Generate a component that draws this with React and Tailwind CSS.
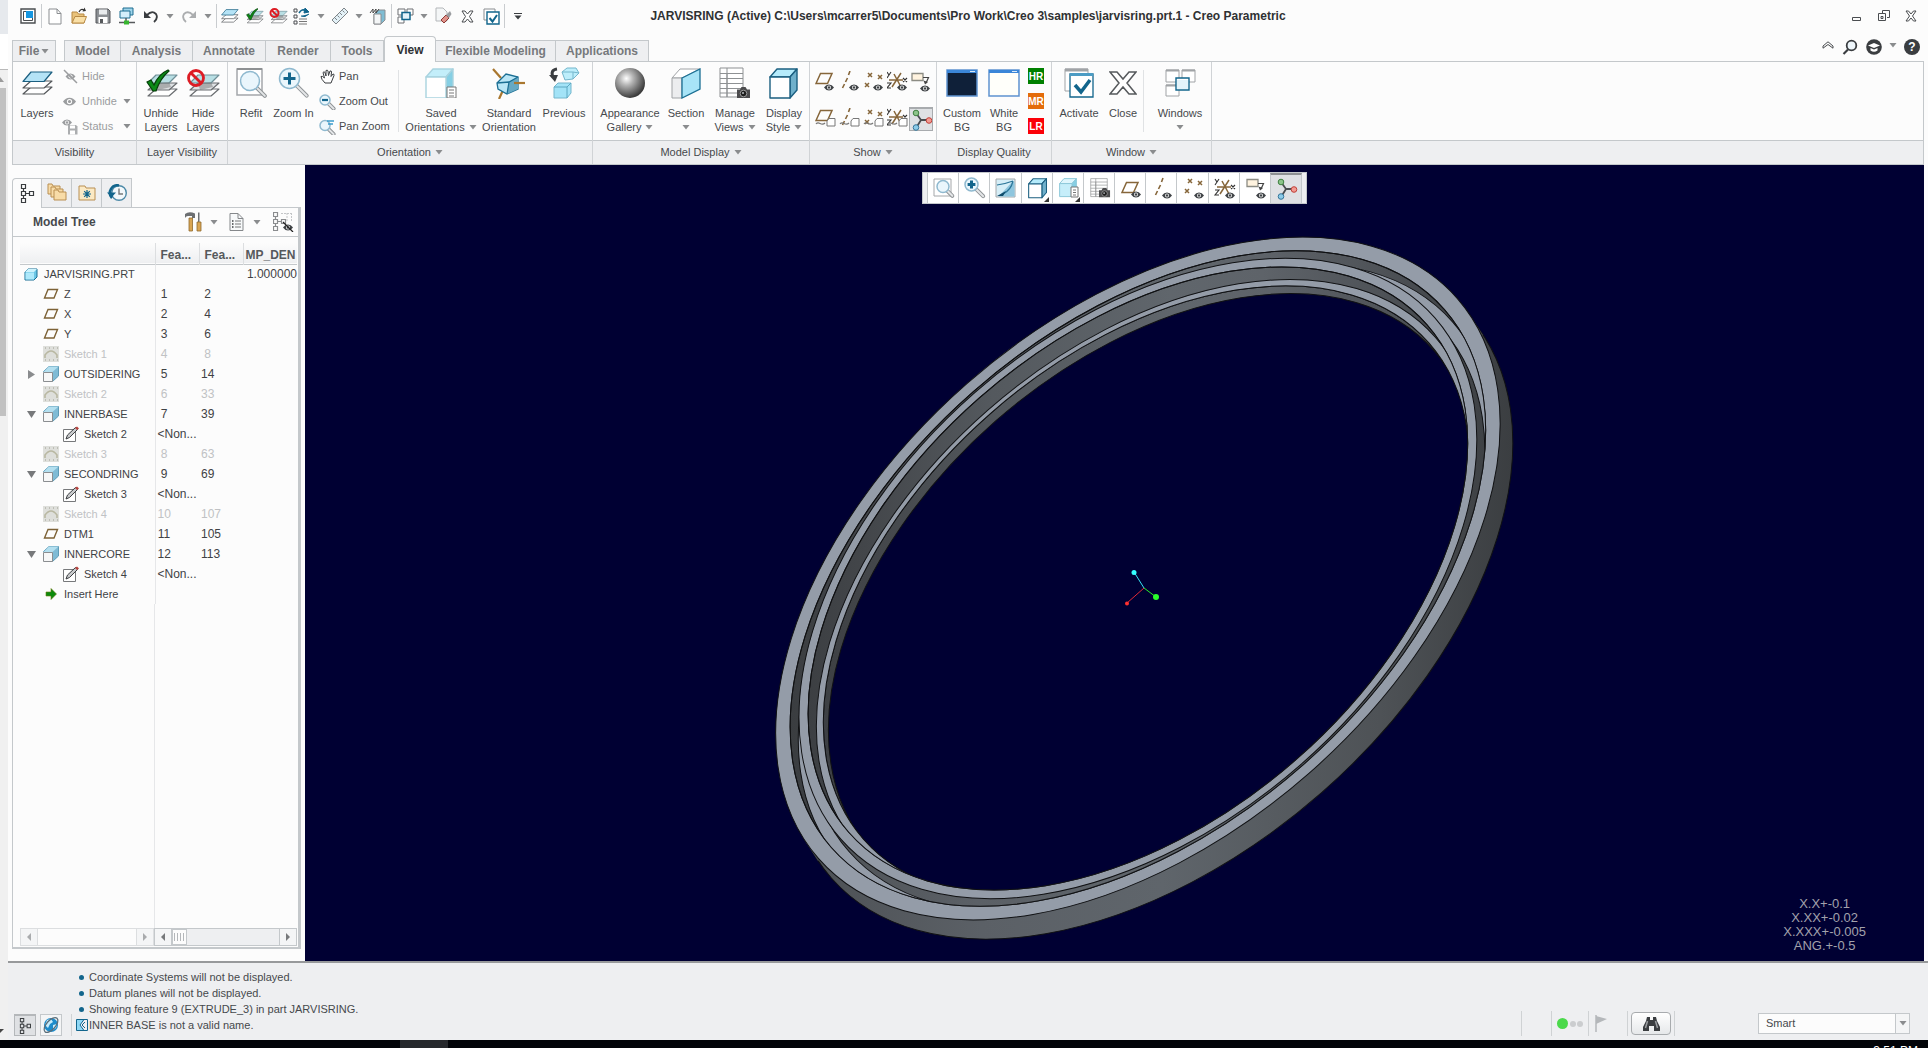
import React from "react";

/* ---------- shared glyphs ---------- */

const Svg = ({ w = 20, h = 20, children }) => (
  <svg width={w} height={h} viewBox={`0 0 ${w} ${h}`} fill="none" className="shrink-0" aria-hidden="true">
    {children}
  </svg>
);

const Arrow = ({ dark }) => (
  <svg width="8" height="5" viewBox="0 0 8 5" className="inline-block shrink-0 align-middle" aria-hidden="true">
    <path d="M0.5 0h7L4 4.6z" fill={dark ? "#404040" : "#8a8c8e"} />
  </svg>
);

const Eye = ({ x = 0, y = 0, c = "#3f4346" }) => (
  <g transform={`translate(${x} ${y})`}>
    <path d="M0 3.5Q2 .5 5 .5t5 3Q8 6.500 5 6.500T0 3.500z" fill={c} />
    <circle cx="5" cy="3.500" r="2" fill="#fff" />
    <circle cx="5" cy="3.500" r="1.200" fill={c} />
  </g>
);

const Cam = ({ x = 0, y = 0 }) => (
  <g transform={`translate(${x} ${y})`}>
    <path d="M0 2.500h3L4.500 0h4L10 2.500h3V11H0z" fill="#4b4b4d" />
    <circle cx="6.500" cy="6.500" r="3.300" fill="#1e1e1e" stroke="#9a9a9a" />
    <circle cx="6" cy="6" r="1" fill="#b8bcc0" />
  </g>
);

const Lens = ({ x, y, r, len, sign }) => (
  <g>
    <path d={`M${x + r * 0.72} ${y + r * 0.72}l${len} ${len}`} stroke="#8f9396" strokeWidth="4" strokeLinecap="round" />
    <path d={`M${x + r * 0.72} ${y + r * 0.72}l${len} ${len}`} stroke="#e4e6e8" strokeWidth="2" strokeLinecap="round" />
    <circle cx={x} cy={y} r={r} fill="#eaf6fc" stroke="#8fb9cf" strokeWidth="1.500" />
    {sign === "+" && <path d={`M${x - r * 0.6} ${y}h${r * 1.2}M${x} ${y - r * 0.6}v${r * 1.2}`} stroke="#12658c" strokeWidth={r > 6 ? 3 : 2.2} />}
    {sign === "-" && <path d={`M${x - r * 0.6} ${y}h${r * 1.2}`} stroke="#12658c" strokeWidth="2.200" />}
  </g>
);

const Stack = ({ k = 1 }) => (
  <g transform={`scale(${k})`} strokeWidth={1.2} strokeLinejoin="round">
    <path d="M1 23L9 16H30L22 23z" fill="#fff" stroke="#55585b" />
    <path d="M1 17L9 10H30L22 17z" fill="#fff" stroke="#55585b" />
    <path d="M1 10.500L9 1H30L22 10.500z" fill="#b5e3f6" stroke="#1b5f80" />
  </g>
);

const StackGray = ({ k = 1 }) => (
  <g transform={`scale(${k})`} strokeWidth={1.2} strokeLinejoin="round">
    <path d="M4 27L12 20H33L25 27z" fill="#fff" stroke="#6a6d70" />
    <path d="M4 21L12 14H33L25 21z" fill="#dfe2e4" stroke="#6a6d70" />
    <path d="M4 14L12 6H33L25 14z" fill="#b9dfe4" stroke="#6f8f98" />
    <path d="M12 14L25 13L27 18L14 21z" fill="#777" opacity=".5" />
  </g>
);

const Check = ({ k = 1 }) => (
  <path transform={`scale(${k})`} d="M3 13L7 11L10 16C13 9 17 4 24 1L25 2C19 7 15 13 12 22H9z" fill="#0b8a16" stroke="#063f09" strokeWidth="1.200" />
);

const No = ({ x, y, r }) => (
  <g stroke="#dd1c24" strokeWidth={r > 6 ? 2.8 : 2}>
    <circle cx={x} cy={y} r={r} />
    <path d={`M${x - r * 0.7} ${y - r * 0.7}L${x + r * 0.7} ${y + r * 0.7}`} />
  </g>
);

const Cube = ({ k = 1, line = "#1b5f80", front = "#fff", top = "#b5ebfb", side = "#6fb0cb" }) => (
  <g transform={`scale(${k})`} stroke={line} strokeWidth={1.4 / k > 1.6 ? 1.6 : 1.4} strokeLinejoin="round">
    <path d="M1 9L8 1H28L21 9z" fill={top} />
    <path d="M21 9L28 1V22L21 30z" fill={side} />
    <path d="M1 9H21V30H1z" fill={front} />
  </g>
);

const Triad = () => (
  <g>
    <path d="M5 4L10 11L5 19M10 11H18" stroke="#4a4d50" strokeWidth="1.800" />
    <circle cx="5" cy="4" r="2.800" fill="#8cc48a" stroke="#3f8040" />
    <circle cx="5" cy="18.500" r="2.800" fill="#8ccbe8" stroke="#34759a" />
    <circle cx="18" cy="11.500" r="2.800" fill="#f29a92" stroke="#c04038" />
  </g>
);

const Planes = () => <path d="M5.500 2.500H17L12.500 12.500H1z" stroke="#86663a" strokeWidth="1.500" />;
const Axis = () => <path d="M11 0L9.500 4M8.500 7L6.500 11M5.500 13L3.500 17" stroke="#86663a" strokeWidth="1.600" />;
const Points = () => (
  <path d="M5 2l4 4m0-4l-4 4M15 4l4 4m0-4l-4 4M2 12l4 4m0-4l-4 4" stroke="#86663a" strokeWidth="1.500" />
);
const Csys = () => (
  <g>
    <path d="M2 9H16M7 3L14 16M14 2L5 16" stroke="#86663a" strokeWidth="1.500" />
    <path d="M0 1l2 3 2-3M2 4l-2 3M16 7l4 4m0-4l-4 4M0 12h4l-4 5h4" stroke="#333" strokeWidth="1.100" />
  </g>
);
const Note = () => (
  <g>
    <path d="M1 2.500H12V9.500H1z" fill="#fff3df" stroke="#8c8c84" strokeWidth="1.300" />
    <path d="M12 6.500H17.500L15 12" stroke="#444" strokeWidth="1.200" />
    <path d="M12.500 9.500L17 11L14 13.500z" fill="#444" />
  </g>
);
const Tag = () => (
  <g>
    <path d="M12 13L14 10.500H20V18H12z" fill="#fff" stroke="#777" />
    <path d="M1 16c3-4 5 3 9-1" stroke="#777" strokeWidth="1.200" />
  </g>
);
const SheetTable = () => (
  <g stroke="#8e9193">
    <path d="M1 1H24V30H1z" fill="#fff" />
    <path d="M1 6.500H24M1 11.500H24M1 16.500H24M1 21.500H24M1 26H24M8 6V30M8 1V30" />
  </g>
);
const Doc = ({ children }) => (
  <g>
    <path d="M3 1.500H11L16 6.500V18.500H3z" fill="#f7f9fa" stroke="#85888b" />
    <path d="M11 1.500V6.500H16" stroke="#85888b" />
    {children}
  </g>
);
const TreeGlyph = ({ c = "#3a3d40" }) => (
  <path d="M2.500 .5h4v4h-4zM2.500 7.500h4v4h-4zM2.500 14.500h4v4h-4zM10.500 7.500h4v4h-4zM4.500 4.500v3M4.500 11.500v3M6.500 9.500h4" stroke={c} strokeWidth="1.200" />
);
const WindowGlyph = ({ body }) => (
  <Svg w={32} h={28}>
    <path d="M1 1H31V27H1z" fill={body} stroke="#5f93d0" strokeWidth="1.500" />
    <path d="M1 1H31V4H1z" fill="#3b86d8" />
    <path d="M24 2.500h5" stroke="#d9e9f8" />
  </Svg>
);

/* ---------- quick access bar ---------- */

const Sep = () => (
  <span className="flex w-[3px] shrink-0 justify-center">
    <span className="h-6 w-px bg-[#c9cccf]" />
  </span>
);

const QBtn = ({ label, children }) => (
  <button aria-label={label} className="flex h-6 w-6 shrink-0 items-center justify-center">
    {children}
  </button>
);
const QDrop = ({ label, dark }) => (
  <button aria-label={label} className="flex h-6 w-[14px] shrink-0 items-center justify-center">
    <Arrow dark={dark} />
  </button>
);

function QuickBar() {
  return (
    <div className="flex items-center pl-2">
      <QBtn label="Window menu">
        <Svg w={16} h={16}>
          <path d="M1 1H15V15H1z" stroke="#4a4d50" strokeWidth="1.400" fill="#fff" />
          <path d="M3.500 3.500H12.500V12.500H3.500z" stroke="#4a4d50" fill="#fff" />
          <path d="M6 3H13V10H6z" fill="#1696e0" />
        </Svg>
      </QBtn>
      <Sep />
      <QBtn label="New">
        <Svg w={14} h={17}>
          <path d="M1 1H9L13 5.500V16H1z" fill="#fff" stroke="#8b8e91" />
          <path d="M9 1V5.500H13" stroke="#8b8e91" />
        </Svg>
      </QBtn>
      <QBtn label="Open">
        <Svg w={18} h={18}>
          <path d="M2 16V5H7L8.500 7H14V16z" fill="#e9c27a" stroke="#b88a45" />
          <path d="M2 16L5 9.500H16.500L14 16z" fill="#f9dfa6" stroke="#b88a45" />
          <path d="M9 5Q11 1 14 3" stroke="#333" strokeWidth="1.300" />
          <path d="M12.500 4.500L16 4L14.500 .5z" fill="#333" />
        </Svg>
      </QBtn>
      <QBtn label="Save">
        <Svg w={16} h={16}>
          <path d="M1 1H13L15 3V15H1z" fill="#8b8f93" stroke="#56595c" />
          <path d="M4 1.500H12V6.500H4z" fill="#e8ebed" />
          <path d="M3.500 9H12.500V15H3.500z" fill="#fff" />
          <path d="M5 11h3v4H5z" fill="#56595c" />
        </Svg>
      </QBtn>
      <QBtn label="Conferencing">
        <Svg w={18} h={18}>
          <path d="M5 1H15V8H5z" fill="#9fd4ea" stroke="#1d6c90" />
          <path d="M2 4H12V11H2z" fill="#d4eefa" stroke="#1d6c90" />
          <path d="M8 11v4M1 15.500H17" stroke="#56595c" strokeWidth="1.500" />
          <path d="M6 13.500h5v4H6z" fill="#37b62f" />
        </Svg>
      </QBtn>
      <QBtn label="Undo">
        <Svg w={16} h={14}>
          <path d="M4 6Q9 1 13 5Q15.500 9 11 13" stroke="#3a3d40" strokeWidth="1.800" />
          <path d="M1 2V9H8z" fill="#3a3d40" />
        </Svg>
      </QBtn>
      <QDrop label="Undo list" />
      <QBtn label="Redo">
        <Svg w={16} h={14}>
          <path d="M12 6Q7 1 3 5Q.5 9 5 13" stroke="#abadaf" strokeWidth="1.800" />
          <path d="M15 2V9H8z" fill="#abadaf" />
        </Svg>
      </QBtn>
      <QDrop label="Redo list" />
      <Sep />
      <QBtn label="Layers"><Svg w={18} h={15}><Stack k={0.57} /></Svg></QBtn>
      <QBtn label="Unhide layers"><Svg w={19} h={16}><StackGray k={0.55} /><Check k={0.52} /></Svg></QBtn>
      <QBtn label="Hide layers"><Svg w={19} h={16}><StackGray k={0.55} /><No x={5.5} y={5} r={4} /></Svg></QBtn>
      <QBtn label="Regenerate">
        <Svg w={18} h={17}>
          <path d="M1 1h3v3H1zM1 7h3v3H1zM1 13h3v3H1z" stroke="#4a4d50" />
          <path d="M6 11h8M6 13.500h8M6 16h8" stroke="#777" />
          <path d="M6 5Q9 0 13 3" stroke="#12658c" strokeWidth="1.600" />
          <path d="M12 0l4 4-5 1zM16 6Q12 10 8 8" stroke="#12658c" fill="#12658c" />
        </Svg>
      </QBtn>
      <QDrop label="Regenerate list" />
      <QBtn label="Measure">
        <Svg w={18} h={18}>
          <path d="M1 13L13 1L17 5L5 17z" fill="#e3f1f7" stroke="#7e8488" />
          <path d="M4 11l2 2M6.500 8.500l2 2M9 6l2 2M11.500 3.500l2 2" stroke="#7e8488" />
        </Svg>
      </QBtn>
      <QDrop label="Measure list" />
      <QBtn label="Annotation display">
        <Svg w={18} h={18}>
          <path d="M5 7L9 3H16V13L12 17H5z" fill="#7fbdd4" stroke="#8b8e91" />
          <path d="M5 7H12V17H5z" fill="#f4f6f7" stroke="#8b8e91" />
          <path d="M1 6l3-4v4l3-4v4l3-4" stroke="#444" />
        </Svg>
      </QBtn>
      <Sep />
      <QBtn label="Windows">
        <Svg w={17} h={16}>
          <path d="M1 1H8V7H1zM10 1H16V7H10zM1 9H7V15H1z" fill="#fff" stroke="#6c6f72" />
          <path d="M5 4.500H13V11.500H5z" fill="#e4f3fa" stroke="#12658c" strokeWidth="1.500" />
        </Svg>
      </QBtn>
      <QDrop label="Windows list" />
      <QBtn label="Erase">
        <Svg w={18} h={18}>
          <path d="M2 1H9L13 5V14H2z" fill="#f4f6f7" stroke="#b4b7ba" />
          <path d="M7 13L12 8L15 11L10 16z" fill="#e0928a" stroke="#8d3a35" />
          <path d="M12 8L16 4L17.500 7L15 11z" fill="#9a9da0" />
        </Svg>
      </QBtn>
      <QBtn label="Close">
        <Svg w={13} h={13}>
          <path d="M1 1H4L6.500 4L9 1H12L8.500 6.500L12 12H9L6.500 9L4 12H1L4.500 6.500z" fill="#fff" stroke="#4a4d50" />
        </Svg>
      </QBtn>
      <QBtn label="Activate">
        <Svg w={17} h={17}>
          <path d="M1 1H12V12H1z" fill="#fff" stroke="#8b8e91" />
          <path d="M4 4H16V16H4z" fill="#fff" stroke="#12658c" strokeWidth="1.400" />
          <path d="M6.500 10l3 3.500L14 7" stroke="#12658c" strokeWidth="2" />
        </Svg>
      </QBtn>
      <Sep />
      <button aria-label="Customize quick access" className="flex h-6 w-6 items-center justify-center">
        <Svg w={8} h={7}>
          <path d="M0 .5H8" stroke="#3a3d40" />
          <path d="M.5 2.500h7L4 6.500z" fill="#3a3d40" />
        </Svg>
      </button>
    </div>
  );
}

function TitleBar() {
  return (
    <header className="grid h-8 grid-cols-[1fr_auto_1fr] items-center">
      <QuickBar />
      <h1 className="text-xs font-bold whitespace-nowrap text-[#2f3133]">
        JARVISRING (Active) C:\Users\mcarrer5\Documents\Pro Work\Creo 3\samples\jarvisring.prt.1 - Creo Parametric
      </h1>
      <div className="flex justify-end pr-1">
        <button aria-label="Minimize" className="flex w-[27px] justify-center">
          <Svg w={12} h={12}><path d="M1.500 7.500h8v3h-8z" stroke="#4a4d50" /></Svg>
        </button>
        <button aria-label="Restore" className="flex w-[27px] justify-center">
          <Svg w={12} h={12}>
            <path d="M4.500 3V.5h7v7H9" stroke="#4a4d50" />
            <path d="M.5 3.500h7v7h-7zM3 6.500h2v2H3z" stroke="#4a4d50" />
          </Svg>
        </button>
        <button aria-label="Close window" className="flex w-[27px] justify-center">
          <Svg w={12} h={12}>
            <path d="M1 1H3.500L6 4L8.500 1H11L7.500 6L11 11H8.500L6 8L3.500 11H1L4.500 6z" stroke="#4a4d50" />
          </Svg>
        </button>
      </div>
    </header>
  );
}

/* ---------- tabs ---------- */

const TABS = [
  ["Model", "w-[57px]"],
  ["Analysis", "w-[72px]"],
  ["Annotate", "w-[73px]"],
  ["Render", "w-[65px]"],
  ["Tools", "w-[53px]"],
  ["View", "w-[52px]"],
  ["Flexible Modeling", "w-[120px]"],
  ["Applications", "w-[93px]"],
];

function TabRow() {
  return (
    <nav className="flex h-[29px] items-end pl-1 text-xs font-bold text-[#76797c]">
      <button className="flex h-[21px] w-[44px] items-center justify-center gap-0.5 border border-b-0 border-[#c4c8cb] bg-[#eeeff1]">
        File <Arrow />
      </button>
      <div className="ml-2 flex items-end" role="tablist">
        {TABS.map(([name, w]) =>
          name === "View" ? (
            <button key={name} role="tab" aria-selected="true" className={`${w} relative -mb-px h-[26px] rounded-t-sm border border-b-0 border-[#c4c8cb] bg-[#fcfcfc] text-[#2f3133]`}>
              {name}
            </button>
          ) : (
            <button key={name} role="tab" aria-selected="false" className={`${w} h-[21px] border-t border-r border-[#c4c8cb] bg-[#eeeff1] first:border-l`}>
              {name}
            </button>
          )
        )}
      </div>
      <div className="ml-auto flex items-center self-center pr-1">
        <button aria-label="Minimize ribbon" className="flex w-5 justify-center pb-1">
          <Svg w={12} h={8}><path d="M1 5L6 .8 11 5V7.200L6 3.500 1 7.200z" stroke="#4a4d50" /></Svg>
        </button>
        <button aria-label="Search commands" className="flex w-6 justify-center">
          <Svg w={16} h={16}>
            <circle cx="9.500" cy="6.500" r="4.800" stroke="#3a3d40" strokeWidth="1.800" fill="#eef6fb" />
            <path d="M6 10.500L1.500 15" stroke="#3a3d40" strokeWidth="2.200" />
          </Svg>
        </button>
        <button aria-label="Learning connector" className="flex w-6 justify-center">
          <Svg w={16} h={16}>
            <circle cx="8" cy="8" r="7.800" fill="#3a3d40" />
            <path d="M2 6.500L8 4L14 6.500L8 9z" fill="#fff" />
            <path d="M4.500 9v2.500Q8 14 11.500 11.500V9L8 10.500z" fill="#fff" />
          </Svg>
        </button>
        <button aria-label="Learning list" className="flex w-[14px] justify-center pb-0.5"><Arrow /></button>
        <button aria-label="Help" className="flex w-6 justify-center">
          <span className="flex h-4 w-4 items-center justify-center rounded-full bg-[#3a3d40] text-xs text-white">?</span>
        </button>
      </div>
    </nav>
  );
}

/* ---------- ribbon ---------- */

const Big = ({ w, icon, l1, l2, drop }) => (
  <button className={`flex shrink-0 flex-col items-center pt-1.5 text-[11px] leading-[14px] whitespace-nowrap text-[#46494c] ${w}`}>
    <span className="flex h-[30px] items-center">{icon}</span>
    <span className="mt-2">{l1}</span>
    <span className="flex items-center gap-1">
      {l2}
      {drop && <span className="flex h-[14px] items-center"><Arrow /></span>}
    </span>
  </button>
);

const Small = ({ icon, label, drop, off }) => (
  <button disabled={off} className={`flex h-[25px] items-center text-[11px] whitespace-nowrap ${off ? "text-[#9b9d9f]" : "text-[#46494c]"}`}>
    <span className="mr-1 flex w-4 justify-center">{icon}</span>
    {label}
    {drop && <span className="ml-auto flex pl-1.5"><Arrow /></span>}
  </button>
);

const Group = ({ w, name, drop, children }) => (
  <section className={`flex shrink-0 flex-col border-r border-[#d0d3d6] ${w}`}>
    <div className="flex h-[78px]">{children}</div>
    <div className="flex h-6 items-center justify-center gap-1 border-t border-[#c4c8cb] bg-[#eeeff1] text-[11px] text-[#46494c]">
      {name} {drop && <Arrow />}
    </div>
  </section>
);

const VSep = () => <span className="my-2 w-px shrink-0 bg-[#e0e2e4]" />;

const ShowBtn = ({ label, on, children }) => (
  <button aria-label={label} aria-pressed={!!on} className={`flex h-6 w-6 items-center justify-center ${on ? "border border-t-2 border-[#a8abae] bg-[#dfe1e4]" : ""}`}>
    <Svg w={21} h={22}>{children}</Svg>
  </button>
);

const Q = ({ c, t }) => (
  <button className={`flex h-4 w-4 items-center justify-center text-[10px] font-bold text-white ${c}`}>{t}</button>
);

function Ribbon() {
  return (
    <div className="mr-1 ml-1 flex border border-[#c4c8cb]">
      <Group w="w-[124px]" name="Visibility">
        <Big w="w-[48px]" l1="Layers" icon={<Svg w={31} h={25}><Stack /></Svg>} />
        <div className="flex flex-col pt-0.5 pl-px">
          <Small off label="Hide" icon={<Svg w={15} h={15}><Eye x={2.5} y={4} c="#9b9d9f" /><path d="M1 1L14 14" stroke="#9b9d9f" strokeWidth="1.500" /></Svg>} />
          <Small off drop label="Unhide" icon={<Svg w={14} h={9}><g transform="scale(1.3)"><Eye c="#9b9d9f" /></g></Svg>} />
          <Small off drop label="Status" icon={<Svg w={16} h={16}><Eye c="#9b9d9f" /><path d="M6 6H14L15.500 7.500V15.500H6z" fill="#abadaf" /><path d="M8 6.500h5v3H8zM8 11.500h5v4H8z" fill="#fff" /></Svg>} />
        </div>
      </Group>
      <Group w="w-[91px]" name="Layer Visibility">
        <Big w="ml-[3px] w-[42px]" l1="Unhide" l2="Layers" icon={<Svg w={34} h={29}><StackGray /><Check /></Svg>} />
        <Big w="w-[42px]" l1="Hide" l2="Layers" icon={<Svg w={34} h={29}><StackGray /><No x={10} y={9} r={7.5} /></Svg>} />
      </Group>
      <Group w="w-[365px]" name="Orientation" drop>
        <Big w="ml-0.5 w-[42px]" l1="Refit" icon={<Svg w={31} h={32}><path d="M1 2H26V28H1z" fill="#fff" stroke="#a4a7aa" strokeWidth="1.500" /><path d="M1 2H26" stroke="#8e9193" strokeWidth="2" /><Lens x={14} y={14} r={9.5} len={8} /></Svg>} />
        <Big w="w-[43px]" l1="Zoom In" icon={<Svg w={32} h={32}><Lens x={11.5} y={11.5} r={10} len={10} sign="+" /></Svg>} />
        <div className="flex w-[83px] flex-col pt-0.5 pl-1">
          <Small label="Pan" icon={<Svg w={15} h={15}><path d="M5 14Q1 10 1 7.500Q2 6.500 4.500 9L3 3.500Q4 2 5 3.500L6 7L6 1.500Q7.500 .5 8 2L8.500 6.500L10 2Q11.500 1.500 11.500 3L11 7.500L13 5Q14.500 5 14 6.500L11 14z" fill="#fff" stroke="#3a3d40" /></Svg>} />
          <Small label="Zoom Out" icon={<Svg w={17} h={16}><Lens x={6} y={6} r={5} len={5} sign="-" /></Svg>} />
          <Small label="Pan Zoom" icon={<Svg w={17} h={16}><Lens x={6} y={6.5} r={5} len={5} /><path d="M8 2h7M9 5h5" stroke="#3b9ccb" strokeWidth="1.500" /></Svg>} />
        </div>
        <VSep />
        <Big w="ml-1 w-[76px]" l1="Saved" l2="Orientations" drop icon={<Svg w={33} h={30}><Cube line="#a9d3df" front="#fff" top="#c3eefa" side="#86cfe4" /><path d="M22 19h9v11h-9z" fill="#fff" stroke="#777" /><path d="M24 22h5M24 25h5M24 28h5" stroke="#777" /></Svg>} />
        <Big w="w-[60px]" l1="Standard" l2="Orientation" icon={<Svg w={34} h={31}><path d="M1 1L9 10M22 15H33M12 20L7 31" stroke="#a9772f" strokeWidth="2.200" /><path d="M5 15L14 6L26 9L26 21L15 26L6 21z" fill="#b9e6f6" stroke="#1b6f94" strokeWidth="1.300" /><path d="M17 14L26 9V21L15 26z" fill="#66a9c4" /><path d="M5 15L17 14L26 9M17 14L15 26" stroke="#1b6f94" strokeWidth="1.300" /><path d="M22 15H33" stroke="#a9772f" strokeWidth="2.200" /></Svg>} />
        <Big w="w-[50px]" l1="Previous" icon={<Svg w={32} h={32}><path d="M14 5L19 1H28L31 6L25 12L17 13z" fill="#bdeefb" stroke="#74b6cc" /><path d="M14 5L25 5L31 6M25 5V12" stroke="#74b6cc" /><path d="M6 20L10 16H23V26L19 31H6z" fill="#a3e3f7" stroke="#74b6cc" /><path d="M6 20H19V31M19 20L23 16" stroke="#5ca8c2" /><path d="M9 2Q2 3 5 10" stroke="#3a3d40" strokeWidth="3" /><path d="M1 8L10 8L7 15z" fill="#3a3d40" /></Svg>} />
      </Group>
      <Group w="w-[217px]" name="Model Display" drop>
        <Big w="ml-[6px] w-[62px]" l1="Appearance" l2="Gallery" drop icon={
          <Svg w={30} h={30}>
            <defs><radialGradient id="ball" cx=".38" cy=".35" r=".65"><stop offset="0" stopColor="#fff" /><stop offset=".35" stopColor="#b4b4b4" /><stop offset="1" stopColor="#3c3c3c" /></radialGradient></defs>
            <circle cx="15" cy="15" r="15" fill="url(#ball)" />
          </Svg>} />
        <Big w="w-[50px]" l1="Section" drop icon={<Svg w={30} h={31}><path d="M1 10L9 1H29L11 10z" fill="#fff" stroke="#a0a3a6" /><path d="M1 10H11V30H1z" fill="#ecedef" stroke="#a0a3a6" /><path d="M11 10L29 1V21L11 30z" fill="#a8e4f7" stroke="#1b6f94" strokeWidth="1.300" /></Svg>} />
        <Big w="w-[48px]" l1="Manage" l2="Views" drop icon={<Svg w={33} h={32}><SheetTable /><Cam x={18} y={20} /></Svg>} />
        <Big w="w-[50px]" l1="Display" l2="Style" drop icon={<Svg w={30} h={31}><Cube /></Svg>} />
      </Group>
      <Group w="w-[127px]" name="Show" drop>
        <div className="grid grid-cols-5 content-start gap-y-[13px] pt-2 pl-[3px]">
          <ShowBtn label="Plane display"><Planes /><Eye x={9} y={13} /></ShowBtn>
          <ShowBtn label="Axis display"><Axis /><Eye x={10} y={13} /></ShowBtn>
          <ShowBtn label="Point display"><Points /><Eye x={10} y={13} /></ShowBtn>
          <ShowBtn label="Csys display"><Csys /><Eye x={10} y={13} /></ShowBtn>
          <ShowBtn label="Annotation display"><Note /><Eye x={9} y={14} /></ShowBtn>
          <ShowBtn label="Plane tag display"><Planes /><Tag /></ShowBtn>
          <ShowBtn label="Axis tag display"><Axis /><Tag /></ShowBtn>
          <ShowBtn label="Point tag display"><Points /><Tag /></ShowBtn>
          <ShowBtn label="Csys tag display"><Csys /><Tag /></ShowBtn>
          <ShowBtn label="Spin center" on><Triad /></ShowBtn>
        </div>
      </Group>
      <Group w="w-[115px]" name="Display Quality">
        <Big w="ml-1 w-[42px]" l1="Custom" l2="BG" icon={<WindowGlyph body="#0f2039" />} />
        <Big w="w-[42px]" l1="White" l2="BG" icon={<WindowGlyph body="#fffffa" />} />
        <div className="flex flex-col gap-[9px] pt-[6px] pl-[3px]">
          <Q c="bg-[#008000]" t="HR" />
          <Q c="bg-[#e46c0a]" t="MR" />
          <Q c="bg-[#fb0007]" t="LR" />
        </div>
      </Group>
      <Group w="w-[160px]" name="Window" drop>
        <Big w="ml-[3px] w-[48px]" l1="Activate" icon={<Svg w={30} h={30}><path d="M1 1H24V23H1z" fill="#fff" stroke="#a0a3a6" /><path d="M1 2H24" stroke="#a0a3a6" strokeWidth="3" /><path d="M6 6H29V29H6z" fill="#fff" stroke="#12658c" strokeWidth="1.300" /><path d="M6 6.500H29" stroke="#4c9cc4" strokeWidth="3" /><path d="M11 17l6 7 9-12" stroke="#12658c" strokeWidth="3.500" /></Svg>} />
        <Big w="w-[40px]" l1="Close" icon={<Svg w={28} h={26}><path d="M1 2H8L14 9L20 2H27L18 13L27 24H20L14 17L8 24H1L10 13z" fill="#fff" stroke="#56595c" strokeWidth="1.500" /></Svg>} />
        <VSep />
        <Big w="ml-2 w-[56px]" l1="Windows" drop icon={<Svg w={31} h={28}><path d="M1 1H14V13H1zM17 1H30V13H17zM1 16H14V27H1z" fill="#fff" stroke="#a0a3a6" /><path d="M1 1.500H14M17 1.500H30M1 16.500H14" stroke="#a0a3a6" strokeWidth="2" /><path d="M11 9H24V21H11z" fill="#fff" stroke="#12658c" strokeWidth="1.400" /><path d="M12 11H23V20H12z" fill="#e3f3fa" /></Svg>} />
      </Group>
      <div className="flex flex-1 flex-col">
        <div className="h-[78px]" />
        <div className="h-6 border-t border-[#c4c8cb] bg-[#eeeff1]" />
      </div>
    </div>
  );
}

/* ---------- model tree ---------- */

const PlaneIcon = () => <Svg w={16} h={14}><path d="M5 2.500H14.500L11 11H1.500z" stroke="#7d6236" strokeWidth="1.400" /></Svg>;
const SketchOff = () => (
  <Svg w={16} h={16}>
    <path d="M0 0H16V16H0z" fill="#dedfdb" />
    <path d="M2 12V9Q8 1 14 9V12" stroke="#b9b8a2" strokeWidth="1.600" />
    <path d="M2 2h1M6 2h1M10 2h1M14 2h1M2 14h1M6 14h1M10 14h1M14 14h1" stroke="#9c9c90" />
  </Svg>
);
const Extrude = () => (
  <Svg w={16} h={16}>
    <path d="M.5 5.500L6 .5H15.500V10L9.500 15.500z" fill="#7fbbd5" stroke="#5f9db8" />
    <path d="M.5 6L6 .5H15.500L9.500 6z" fill="#b3dfef" />
    <path d="M.5 6.500H9.500V15.500H.5z" fill="#f7f7f7" stroke="#8b8e91" />
  </Svg>
);
const SketchOn = () => (
  <Svg w={16} h={16}>
    <path d="M.5 3.500H12.500V15.500H.5z" fill="#fff" stroke="#77797b" />
    <path d="M3 13L4.500 9L12.500 1.500L14.500 3.500L6.500 11.500z" fill="#c9cbcd" stroke="#3a3d40" />
    <path d="M12 2L14 .5L16 2.500L14 4z" fill="#b5413c" />
  </Svg>
);
const InsertIcon = () => (
  <Svg w={16} h={12}>
    <path d="M3 4H8V.5L13.500 6L8 11.500V8H3z" fill="#0c8a0c" stroke="#6b7a10" strokeWidth=".6" />
  </Svg>
);
const PartIcon = () => <Svg w={14} h={13}><path d="M1 4L4 1H13V9L10 12H1z" fill="#6cc7e6" stroke="#1b6f94" /><path d="M1.500 4.500H10V11.500H1.500z" fill="#aee9fb" /><path d="M1 4L4 1H13L10 4z" fill="#cdf3fd" /></Svg>;

const KINDS = { plane: <PlaneIcon />, off: <SketchOff />, ext: <Extrude />, sk: <SketchOn />, ins: <InsertIcon /> };

const ROWS = [
  ["plane", "Z", "1", "2"],
  ["plane", "X", "2", "4"],
  ["plane", "Y", "3", "6"],
  ["off", "Sketch 1", "4", "8"],
  ["ext", "OUTSIDERING", "5", "14", "closed"],
  ["off", "Sketch 2", "6", "33"],
  ["ext", "INNERBASE", "7", "39", "open"],
  ["sk", "Sketch 2", "<Non...", ""],
  ["off", "Sketch 3", "8", "63"],
  ["ext", "SECONDRING", "9", "69", "open"],
  ["sk", "Sketch 3", "<Non...", ""],
  ["off", "Sketch 4", "10", "107"],
  ["plane", "DTM1", "11", "105"],
  ["ext", "INNERCORE", "12", "113", "open"],
  ["sk", "Sketch 4", "<Non...", ""],
  ["ins", "Insert Here", "", ""],
];

const Expander = ({ state }) => (
  <button aria-label={state === "open" ? "Collapse" : "Expand"} className="flex w-[10px] justify-center">
    <Svg w={9} h={9}>{state === "open" ? <path d="M0 1H9L4.500 8z" fill="#77797b" /> : <path d="M1 0L8 4.500L1 9z" fill="#8a8c8e" />}</Svg>
  </button>
);

const Val = ({ children }) => <span className="inline-block min-w-[13px] text-center">{children}</span>;

function TreeTable() {
  return (
    <table className="w-full table-fixed border-collapse text-left text-[#3f4245]">
      <colgroup>
        <col className="w-[135px]" />
        <col className="w-[44px]" />
        <col className="w-[44px]" />
        <col />
      </colgroup>
      <thead>
        <tr className="h-[21px] border-b border-[#c4c8cb] bg-linear-to-b from-[#fcfcfc] to-[#eeeff1] text-xs text-[#56595c]">
          <th aria-label="Name" className="border-r border-[#dcdee0] p-0" />
          <th className="border-r border-[#dcdee0] p-0 pt-1 pl-[5px]">Fea...</th>
          <th className="border-r border-[#dcdee0] p-0 pt-1 pl-[5px]">Fea...</th>
          <th className="p-0 pt-1 pl-0.5 whitespace-nowrap">MP_DEN</th>
        </tr>
      </thead>
      <tbody>
        <tr className="h-5">
          <td className="border-r border-[#e6e7e9] p-0 text-[11px]">
            <div className="flex items-center gap-[6px] pl-1"><PartIcon />JARVISRING.PRT</div>
          </td>
          <td className="p-0" />
          <td className="p-0" />
          <td className="p-0 text-right text-xs">1.000000</td>
        </tr>
        {ROWS.map(([kind, name, a, b, state], i) => (
          <tr key={i} className={`h-5 ${kind === "off" ? "text-[#c0c2c4]" : ""}`}>
            <td className="border-r border-[#e6e7e9] p-0 text-[11px] leading-5 whitespace-nowrap">
              <div className={`flex items-center ${kind === "sk" ? "pl-[43px]" : state ? "pl-[6px]" : "pl-[23px]"}`}>
                {state && <Expander state={state} />}
                <span className={`mr-[5px] flex w-4 justify-center ${state ? "ml-[7px]" : ""}`}>{KINDS[kind]}</span>
                {name}
              </div>
            </td>
            <td className="p-0 pl-0.5 text-xs whitespace-nowrap"><Val>{a}</Val></td>
            <td className="p-0 pl-0.5 text-xs"><Val>{b}</Val></td>
            <td className="p-0" />
          </tr>
        ))}
      </tbody>
    </table>
  );
}

const ScrollArrow = ({ dir, off }) => (
  <button aria-label={`Scroll ${dir}`} className="flex w-4 shrink-0 items-center justify-center bg-[#f4f5f6]">
    <Svg w={4} h={8}>
      <path d={dir === "left" ? "M4 0V8L0 4z" : "M0 0V8L4 4z"} fill={off ? "#a9abad" : "#77797b"} />
    </Svg>
  </button>
);

function TreePanel() {
  const tab = "flex h-[29px] w-[30px] items-center justify-center border-t border-r border-[#c4c8cb]";
  return (
    <aside className="flex w-[297px] shrink-0 flex-col pt-[13px] pr-1 pb-3 pl-1">
      <div className="flex" role="tablist">
        <button role="tab" aria-selected="true" aria-label="Model tree tab" className={`${tab} relative -mb-px h-[30px] rounded-tl-sm border-l bg-[#fcfcfc]`}>
          <Svg w={16} h={19}><TreeGlyph /></Svg>
        </button>
        <button role="tab" aria-selected="false" aria-label="Folder browser" className={`${tab} bg-[#eeeff1]`}>
          <Svg w={20} h={20}>
            {[0, 3, 6].map((o) => <path key={o} d={`M${1 + o} ${11 + o}V${1 + o}h4l1 2h7V${11 + o}z`} fill="#f8dca8" stroke="#b98f52" />)}
          </Svg>
        </button>
        <button role="tab" aria-selected="false" aria-label="Favorites" className={`${tab} bg-[#eeeff1]`}>
          <Svg w={18} h={16}>
            <path d="M1 15V1H7L8 3H17V15z" fill="#fbe9c4" stroke="#b98f52" />
            <path d="M9 5v8M5 9h8M6.200 6.200l5.600 5.600M11.800 6.200l-5.600 5.600" stroke="#12658c" strokeWidth="1.200" />
          </Svg>
        </button>
        <button role="tab" aria-selected="false" aria-label="History" className={`${tab} bg-[#eeeff1]`}>
          <Svg w={20} h={18}>
            <circle cx="12" cy="9" r="7.300" fill="#f2f8fb" stroke="#4d8aa8" strokeWidth="1.400" />
            <path d="M12 1.500A7.500 7.500 0 0 0 5 14" stroke="#12658c" strokeWidth="2.600" />
            <path d="M12 4.500V10H16" stroke="#77797b" strokeWidth="1.400" />
            <path d="M0 8.500H9L4.500 13.500z" fill="#12658c" />
          </Svg>
        </button>
      </div>
      <div className="flex min-h-0 flex-1 flex-col border border-r-3 border-b-2 border-[#c4c8cb]">
        <div className="flex h-[29px] shrink-0 items-center border-b border-[#c4c8cb] pr-1 pl-5">
          <h2 className="mr-auto text-xs font-bold text-[#46494c]">Model Tree</h2>
          <button aria-label="Settings" className="flex w-5 justify-center">
            <Svg w={17} h={20}>
              <path d="M0 2Q4 -1 10 1.500V6H7V4H3Q1 4 0 6z" fill="#6c6f72" />
              <path d="M4 6h3.500V19H4z" fill="#d9a552" stroke="#8f6a2d" strokeWidth=".8" />
              <path d="M13 0.500h1.500V10H13z" fill="#6c6f72" />
              <path d="M12 10h4V19h-4z" fill="#d9a552" stroke="#8f6a2d" strokeWidth=".8" />
            </Svg>
          </button>
          <button aria-label="Settings list" className="flex w-[22px] justify-center"><Arrow /></button>
          <button aria-label="Show" className="flex w-[21px] justify-center">
            <Svg w={18} h={20}>
              <Doc><path d="M8 9h6M8 12h6M8 15h6" stroke="#77797b" /><path d="M5 9h1.500M5 12h1.500M5 15h1.500" stroke="#3a3d40" strokeWidth="1.500" /></Doc>
            </Svg>
          </button>
          <button aria-label="Show list" className="flex w-[22px] justify-center"><Arrow /></button>
          <button aria-label="Tree columns" className="ml-[5px] flex w-[21px] justify-center">
            <Svg w={21} h={20}>
              <g transform="translate(-2 0)"><TreeGlyph c="#8a8c8e" /></g>
              <path d="M8 1.500h11M14 1v8M18.500 1v8" stroke="#c4c6c8" strokeDasharray="2 1" />
              <Eye x={10} y={12} />
              <path d="M10 10l10 10" stroke="#222" strokeWidth="1.200" />
            </Svg>
          </button>
        </div>
        <div className="mt-1.5 mr-px ml-[7px] flex min-h-0 flex-1 flex-col">
          <TreeTable />
          <div className="w-[135px] flex-1 border-r border-[#e6e7e9]" />
          <div className="flex h-[18px] shrink-0">
            <div className="flex w-[134px] border border-[#dcdee0]">
              <ScrollArrow dir="left" off />
              <div className="flex-1 border-x border-[#dcdee0]" />
              <ScrollArrow dir="right" off />
            </div>
            <div className="flex flex-1 border border-[#c4c8cb]">
              <ScrollArrow dir="left" />
              <div className="flex flex-1 border-x border-[#c4c8cb] bg-[#eeeff1]">
                <div className="flex w-[15px] items-center justify-center border border-[#c4c8cb] bg-[#fcfcfc]">
                  <Svg w={11} h={8}><path d="M.5 0V8M3.500 0V8M6.500 0V8M9.500 0V8" stroke="#b4b7ba" /></Svg>
                </div>
              </div>
              <ScrollArrow dir="right" />
            </div>
          </div>
        </div>
        <div className="h-px" />
      </div>
    </aside>
  );
}

/* ---------- graphics area ---------- */

/* Circles of the ring project to tilted ellipses: a and b are the half axes, k the depth behind the front face. */
const Ring = ({ a, b, k = 0, ...rest }) => (
  <ellipse
    rx={a}
    ry={b}
    transform={`translate(${1137.9 + 12.7 * k} ${578.5 + 19.3 * k}) rotate(-41.27)`}
    {...rest}
  />
);

const RIM = { a: 424.8, b: 259.3 };
const GROOVE = { a: 407.8, b: 249 };
const HUB = { a: 395.2, b: 247.3 };
const BORE = { a: 384.7, b: 240.4 };
const LIP = { a: 376.2, b: 236.2 };

function Model() {
  const line = { stroke: "#101113" };
  const face = { fill: "#949ca8", ...line };
  const inner = { fill: "url(#innerWall)", ...line };
  const outer = { fill: "url(#outerWall)", ...line };
  return (
    <svg viewBox="305 165 1619 796" preserveAspectRatio="xMidYMid slice" className="h-full w-full" role="img" aria-label="Ring model">
      <defs>
        <linearGradient id="innerWall" gradientUnits="userSpaceOnUse" x1="-269" y1="-236" x2="265" y2="232">
          <stop offset="0" stopColor="#393c3f" />
          <stop offset=".12" stopColor="#43464a" />
          <stop offset=".3" stopColor="#54595e" />
          <stop offset=".55" stopColor="#60666c" />
          <stop offset=".68" stopColor="#5e6369" />
          <stop offset=".85" stopColor="#4e5257" />
          <stop offset="1" stopColor="#383b3e" />
        </linearGradient>
        <linearGradient id="outerWall" gradientUnits="userSpaceOnUse" x1="-265" y1="-232" x2="282" y2="247">
          <stop offset="0" stopColor="#4c5054" />
          <stop offset=".25" stopColor="#5b6066" />
          <stop offset=".5" stopColor="#5f656b" />
          <stop offset=".8" stopColor="#4e5256" />
          <stop offset="1" stopColor="#393c3f" />
        </linearGradient>
        <clipPath id="groove"><Ring {...GROOVE} /></clipPath>
        <clipPath id="bore"><Ring {...BORE} /></clipPath>
        <clipPath id="lip"><Ring {...LIP} k={0.65} /></clipPath>
      </defs>
      <Ring {...RIM} k={1} {...outer} />
      <path d="M1470.500 316L1483 335L818 861L805 841z" fill="#484c50" />
      <Ring {...RIM} {...face} />
      <Ring {...GROOVE} {...inner} />
      <g clipPath="url(#groove)">
        <Ring {...GROOVE} k={0.64} {...face} />
        <Ring {...HUB} k={0.64} {...outer} />
        <Ring {...HUB} {...face} />
      </g>
      <Ring {...GROOVE} fill="none" {...line} />
      <Ring {...BORE} {...inner} />
      <g clipPath="url(#bore)">
        <Ring {...BORE} k={0.65} {...face} />
        <g clipPath="url(#lip)">
          <Ring {...LIP} k={0.65} {...inner} />
          <Ring {...LIP} k={1.05} fill="#000033" {...line} />
        </g>
        <Ring {...LIP} k={0.65} fill="none" {...line} />
      </g>
      <Ring {...BORE} fill="none" {...line} />
      <path d="M1144 588L1134 572" stroke="#35e6f5" />
      <path d="M1144 588L1127 603" stroke="#e32a36" />
      <path d="M1144 588L1156 597" stroke="#2af02a" />
      <circle cx="1134" cy="572.500" r="2.500" fill="#35ffff" />
      <circle cx="1127" cy="603.500" r="2" fill="#ff3030" />
      <circle cx="1156" cy="597" r="3" fill="#2aff2a" />
    </svg>
  );
}

const Corner = () => <path d="M26 24V29H21z" fill="#333" />;

const VIEW_TOOLS = [
  ["Refit", <g transform="translate(5 5)"><path d="M0 1H17V18H0z" fill="#fff" stroke="#a4a7aa" /><Lens x={9} y={8.5} r={6} len={5} /></g>],
  ["Zoom in", <g transform="translate(4 4)"><Lens x={7.5} y={7.500} r={6.5} len={7} sign="+" /></g>],
  ["Repaint", <g transform="translate(4 5)"><path d="M1 1H20V19H1z" fill="#d6eef7" stroke="#a4a7aa" /><path d="M4 18L18 3L19.500 5V18.500H4z" fill="#8fc6de" /><path d="M2 7Q10 6 18 3M18 3Q16 12 8 16" stroke="#2b7598" strokeWidth="1.200" /><path d="M2 18L11 13L8 18z" fill="#0f4c6b" /></g>],
  ["Display style", <g><g transform="translate(5 5)"><Cube k={0.66} /></g><Corner /></g>],
  ["Saved orientations", <g><g transform="translate(5 5)"><Cube k={0.62} line="#8ec8da" front="#c6eefa" top="#dff6fd" side="#86cfe4" /></g><path d="M17 14h7v10h-7z" fill="#fff" stroke="#777" /><path d="M19 17h3M19 19.500h3M19 22h3" stroke="#777" /><Corner /></g>],
  ["View manager", <g transform="translate(5 5)"><g transform="scale(.72 .62)"><SheetTable /></g><g transform="translate(9 10) scale(.85)"><Cam /></g></g>],
  ["Plane display", <g transform="translate(5 7)"><Planes /><Eye x={10} y={11} /></g>],
  ["Axis display", <g transform="translate(5 5)"><Axis /><Eye x={10} y={14} /></g>],
  ["Point display", <g transform="translate(5 4)"><Points /><Eye x={11} y={15} /></g>],
  ["Csys display", <g transform="translate(5 5)"><Csys /><Eye x={10} y={14} /></g>],
  ["Annotation display", <g transform="translate(5 4)"><Note /><Eye x={10} y={15} /></g>],
  ["Spin center", <g transform="translate(4 4)"><Triad /></g>],
];

function Graphics() {
  return (
    <main className="relative mr-1 min-w-0 flex-1 overflow-hidden bg-[#000033]">
      <div className="absolute inset-0"><Model /></div>
      <div className="absolute inset-x-0 top-[7px] mx-auto flex h-8 w-[385px] border border-[#c4c8cb] bg-[#eeeff1] px-1">
        {VIEW_TOOLS.map(([label, art], i) => (
          <button key={label} aria-label={label} className={`flex flex-1 items-center justify-center border-l border-[#c4c8cb] last:border-r ${i === 11 ? "border-t-2 border-t-[#8e9193] bg-[#dfe1e4]" : "bg-white"}`}>
            <Svg w={28} h={30}>{art}</Svg>
          </button>
        ))}
      </div>
      <div className="absolute right-[58px] bottom-2 text-center text-[13px] leading-[14px] text-[#a2a2ac]">
        <p>X.X+-0.1</p>
        <p>X.XX+-0.02</p>
        <p>X.XXX+-0.005</p>
        <p>ANG.+-0.5</p>
      </div>
    </main>
  );
}

/* ---------- status bar ---------- */

const MESSAGES = [
  "Coordinate Systems will not be displayed.",
  "Datum planes will not be displayed.",
  "Showing feature 9 (EXTRUDE_3) in part JARVISRING.",
  "INNER BASE is not a valid name.",
];

const StatusSep = ({ m }) => <span className={`h-[25px] w-px bg-[#cfd2d4] ${m}`} />;

function StatusBar() {
  return (
    <footer className="flex h-[79px] shrink-0 items-end border-t-2 border-[#97999b] bg-[#eeeff1] pr-[18px] pb-1 pl-1.5">
      <button aria-label="Toggle navigator" aria-pressed="true" className="flex h-[22px] w-[22px] items-center justify-center border border-t-2 border-[#b4b7ba] bg-[#dfe1e4]">
        <svg width="14" height="16" viewBox="0 0 16 19" fill="none" aria-hidden="true"><TreeGlyph /></svg>
      </button>
      <button aria-label="Toggle browser" className="ml-1 flex h-[22px] w-[22px] items-center justify-center border border-[#c4c8cb] bg-[#f4f5f6]">
        <Svg w={18} h={18}>
          <circle cx="9" cy="9" r="7" fill="#1e8ccb" />
          <path d="M5 4l4-1 2 3-3 2-2 4-3-3zM11 9l4-1-1 4-3 2z" fill="#c8ecfb" />
          <ellipse cx="9" cy="9" rx="9" ry="4.500" transform="rotate(-48 9 9)" stroke="#5a6d79" strokeWidth="1.300" />
        </Svg>
      </button>
      <span className="ml-[9px] h-[22px] w-px bg-[#cfd2d4]" />
      <ul className="ml-[3px] self-start pt-[6px] text-[11px] leading-4 text-[#46494c]">
        {MESSAGES.map((m, i) => (
          <li key={m} className="flex items-center">
            <span className="mr-px flex w-[13px] justify-center">
              {i < 3 ? (
                <Svg w={5} h={5}><circle cx="2.500" cy="2.500" r="2.500" fill="#12658c" /></Svg>
              ) : (
                <Svg w={12} h={12}>
                  <path d="M.5 .5H8L4 6L8 11.500H.5z" fill="#8fd8f5" stroke="#12658c" />
                  <path d="M8 .5H11.500V11.500H8M9 3L6 6L9 9" stroke="#12658c" />
                </Svg>
              )}
            </span>
            {m}
          </li>
        ))}
      </ul>
      <div className="ml-auto flex items-center">
        <StatusSep m="mr-[29px]" />
        <StatusSep m="mr-[5px]" />
        <span className="h-[11px] w-[11px] rounded-full bg-[#4bd94b]" />
        <span className="ml-0.5 h-1.5 w-1.5 rounded-full bg-[#cbcdcf]" />
        <span className="ml-px h-1.5 w-1.5 rounded-full bg-[#cbcdcf]" />
        <StatusSep m="ml-[5px] mr-1.5" />
        <Svg w={13} h={17}><path d="M1 0V17" stroke="#b4b7ba" strokeWidth="1.500" /><path d="M1 1L12 4L1 9z" fill="#b4b7ba" /></Svg>
        <StatusSep m="ml-[19px] mr-[3px]" />
        <button aria-label="Find" className="flex h-[23px] w-10 items-center justify-center rounded-sm border border-[#a8abae] bg-linear-to-b from-white to-[#e6e8ea]">
          <Svg w={17} h={16}>
            <path d="M4 1h3v3h3V1h3l1 4 3 6v4h-6v-5H6v5H0v-4l3-6z" fill="#3a3d40" />
            <path d="M4.500 5l-2 7M12.500 5l2 7" stroke="#9a9da0" strokeWidth="1.500" />
          </Svg>
        </button>
        <StatusSep m="ml-[3px] mr-[83px]" />
        <div className="relative h-[21px] w-[152px]">
          <select aria-label="Selection filter" defaultValue="Smart" className="block h-full w-full appearance-none border border-[#c4c8cb] bg-[#fcfcfc] pl-[7px] text-[11px] text-[#46494c]">
            <option>Smart</option>
          </select>
          <span className="pointer-events-none absolute inset-y-0 right-0 flex w-[15px] items-center justify-center border border-[#c4c8cb] bg-[#f4f5f6]"><Arrow /></span>
        </div>
      </div>
    </footer>
  );
}

/* ---------- neighbouring window edge ---------- */

function EdgeStrip() {
  return (
    <div className="flex w-2 shrink-0 flex-col bg-[#f0f0f0]">
      <div className="h-[34px] bg-[#e6e9ed]" />
      <div className="h-9 border-b border-[#b9b9b9] bg-white" />
      <div className="flex h-[18px] items-center"><Svg w={4} h={5}><path d="M0 0L4 5H0z" fill="#9a9a9a" /></Svg></div>
      <div className="h-[328px] w-1.5 bg-[#c1c1c1]" />
      <div className="mt-auto pb-[7px]"><Svg w={4} h={4}><path d="M0 0H4L0 4z" fill="#444" /></Svg></div>
    </div>
  );
}

export default function App() {
  return (
    <div className="flex h-screen flex-col overflow-hidden bg-[#fcfcfc] font-['Liberation_Sans',Arial,sans-serif]">
      <div className="flex min-h-0 flex-1">
        <EdgeStrip />
        <div className="flex min-w-0 flex-1 flex-col">
          <TitleBar />
          <TabRow />
          <Ribbon />
          <div className="flex min-h-0 flex-1">
            <TreePanel />
            <Graphics />
          </div>
          <StatusBar />
        </div>
      </div>
      <div className="flex h-2 shrink-0 overflow-hidden bg-[#020408] pr-[10px] pl-[400px]">
        <div className="w-12 bg-[#26282c]" />
        <span className="ml-auto pt-[3px] text-xs leading-4 text-white">3:51 PM</span>
      </div>
    </div>
  );
}
